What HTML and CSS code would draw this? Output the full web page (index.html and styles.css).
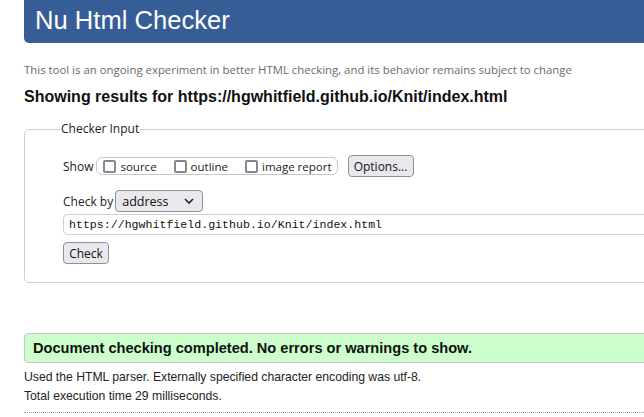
FILE: index.html
```html
<!DOCTYPE html>
<html lang="en">
<head>
<meta charset="utf-8">
<title>Nu Html Checker</title>
<link rel="stylesheet" href="styles.css">
</head>
<body>
<div class="page">
  <header class="banner"><h1 class="banner-title">Nu Html Checker</h1></header>
  <p class="intro">This tool is an ongoing experiment in better HTML checking, and its behavior remains subject to change</p>
  <h2 class="results-for">Showing results for https://hgwhitfield.github.io/Knit/index.html</h2>
  <fieldset class="checker">
    <legend class="checker-legend">Checker Input</legend>
    <div class="row show-row">
      <span class="lbl">Show</span>
      <span class="opts">
        <label class="opt"><span class="box"></span>source</label>
        <label class="opt"><span class="box"></span>outline</label>
        <label class="opt"><span class="box"></span>image report</label>
      </span>
      <span class="btn options-btn">Options...</span>
    </div>
    <div class="row checkby-row">
      <span class="lbl">Check by</span>
      <span class="select">address<svg class="chev" width="10" height="6" viewBox="0 0 10 6"><path d="M1 1 L5 5 L9 1" fill="none" stroke="#222" stroke-width="1.6"/></svg></span>
    </div>
    <div class="url">https://hgwhitfield.github.io/Knit/index.html</div>
    <span class="btn check-btn">Check</span>
  </fieldset>
  <div class="success">Document checking completed. No errors or warnings to show.</div>
  <p class="details first">Used the HTML parser. Externally specified character encoding was utf-8.</p>
  <p class="details">Total execution time 29 milliseconds.</p>
  <div class="dotted"></div>
</div>
</body>
</html>
```

FILE: styles.css
```css
html, body {
  margin: 0;
  padding: 0;
  background: #fff;
  overflow: hidden;
}
.page {
  width: 760px;
  margin-left: 24px;
  font-family: "Liberation Sans", Arial, sans-serif;
  color: #111;
}
.banner {
  background: #365d95;
  height: 43px;
  border-radius: 0 0 0 5px;
  display: flex;
  align-items: center;
}
.banner-title {
  margin: 0 0 0 11px;
  font-family: "Liberation Sans", Arial, sans-serif;
  font-weight: normal;
  font-size: 25.6px;
  color: #fff;
  line-height: 1;
  position: relative;
  top: -1px;
}
.intro {
  margin: 19px 0 0 0;
  font-family: "Open Sans", "Noto Sans", sans-serif;
  font-size: 11.4px;
  line-height: 16px;
  color: #6b6b6b;
}
.results-for {
  margin: 9px 0 0 0;
  font-size: 16px;
  line-height: 20px;
  font-weight: bold;
  color: #111;
}
.checker {
  margin: 14px 0 0 0;
  border: 1px solid #cfcfcf;
  border-radius: 5px;
  padding: 0 0 18px 38px;
  font-family: "Open Sans", "Noto Sans", sans-serif;
  font-size: 12px;
  color: #222;
}
.checker-legend {
  padding: 0 1px;
  margin-left: -3px;
  font-size: 12px;
  line-height: 16px;
  color: #222;
}
.row {
  display: flex;
  align-items: center;
}
.show-row {
  margin-top: 18px;
  height: 22px;
}
.lbl {
  margin-right: 3px;
}
.opts {
  display: flex;
  align-items: center;
  height: 16px;
  border: 1px solid #c8c8c8;
  border-radius: 6px;
  padding: 0 5px 0 6px;
  margin-right: 10px;
}
.opt {
  display: flex;
  align-items: center;
  margin-right: 17px;
  font-size: 11.5px;
}
.opt:last-child {
  margin-right: 0;
}
.box {
  width: 9px;
  height: 9px;
  border: 2px solid #878794;
  border-radius: 2px;
  margin-right: 4px;
}
.btn {
  display: inline-flex;
  align-items: center;
  justify-content: center;
  box-sizing: border-box;
  background: #e9e9ed;
  border: 1px solid #8f8f9d;
  border-radius: 4px;
  font-size: 12px;
  color: #111;
}
.options-btn {
  width: 66px;
  height: 22px;
}
.checkby-row {
  margin-top: 13px;
  height: 22px;
}
.select {
  display: inline-flex;
  align-items: center;
  justify-content: space-between;
  box-sizing: border-box;
  width: 88px;
  height: 22px;
  padding: 0 8px 0 6px;
  background: #e9e9ed;
  border: 1px solid #8f8f9d;
  border-radius: 4px;
  font-size: 12.5px;
  color: #111;
  margin-left: -1px;
}
.url {
  margin-top: 2px;
  box-sizing: border-box;
  height: 21px;
  border: 1px solid #cfcfcf;
  border-right: none;
  border-radius: 5px 0 0 5px;
  padding: 0 0 0 5px;
  display: flex;
  align-items: center;
  font-family: "Liberation Mono", "DejaVu Sans Mono", monospace;
  font-size: 11.6px;
  color: #111;
}
.check-btn {
  margin-top: 7px;
  width: 46px;
  height: 22px;
}
.success {
  margin-top: 50px;
  box-sizing: border-box;
  height: 30px;
  background: #ccffcc;
  border: 1px solid #c6c6c6;
  border-radius: 4px 0 0 4px;
  padding-left: 8px;
  display: flex;
  align-items: center;
  font-weight: bold;
  font-size: 14.6px;
  color: #111;
}
.details {
  margin: 0;
  font-size: 12.2px;
  line-height: 19px;
  color: #222;
}
.details.first {
  margin-top: 5px;
}
.dotted {
  margin-top: 6px;
  border-top: 1px dotted #999;
}
```
